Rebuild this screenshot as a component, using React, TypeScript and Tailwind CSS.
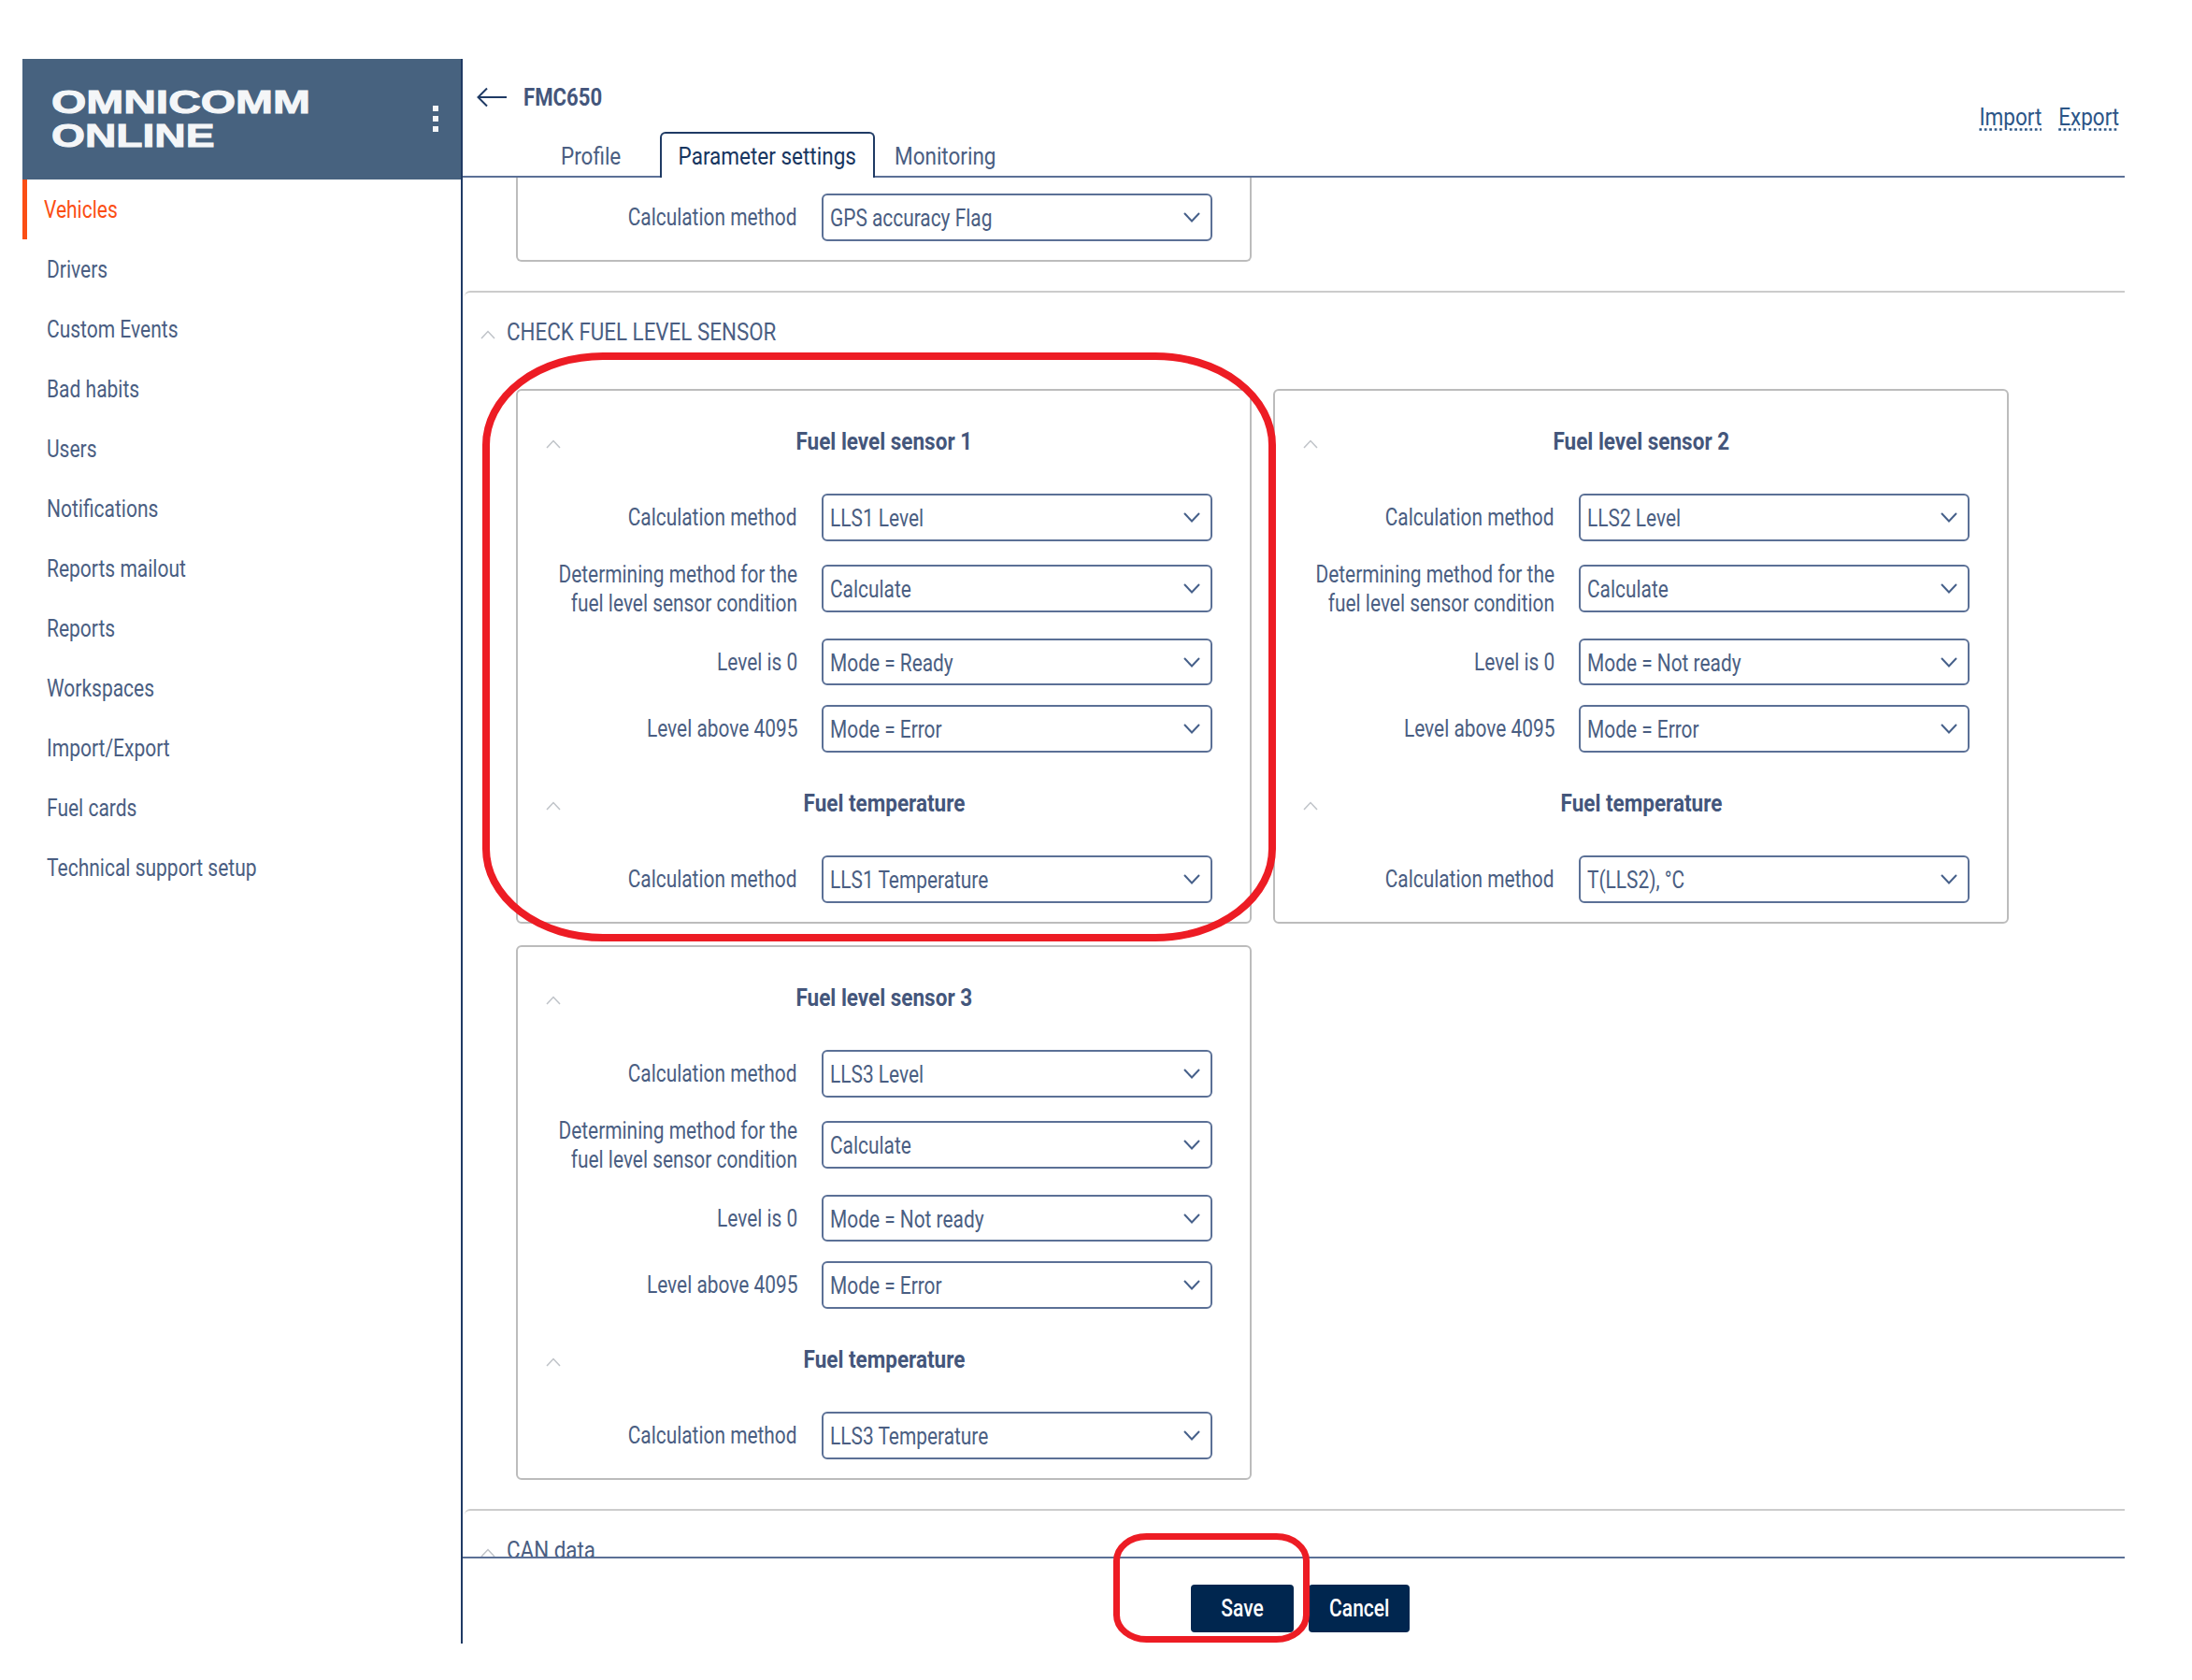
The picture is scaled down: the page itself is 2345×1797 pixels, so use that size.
import type { ReactNode } from "react";

const navItems = [
  "Vehicles",
  "Drivers",
  "Custom Events",
  "Bad habits",
  "Users",
  "Notifications",
  "Reports mailout",
  "Reports",
  "Workspaces",
  "Import/Export",
  "Fuel cards",
  "Technical support setup",
];

type SensorProps = {
  title: string;
  method: string;
  zero: string;
  temp: string;
};

function ChevronUp() {
  return (
    <svg width="16" height="10" viewBox="0 0 16 10" fill="none" stroke="#bfc3c8" strokeWidth="1.5">
      <path d="M1 9 L8 1.5 L15 9" />
    </svg>
  );
}

function Select({ value }: { value: string }) {
  return (
    <div className="flex h-full w-[418px] shrink-0 items-center justify-between rounded-[6px] border-2 border-[#5b7096] bg-white pl-[7px] pr-[11px]">
      <span className="inline-block origin-left scale-x-[0.835] whitespace-nowrap pt-[3px]">{value}</span>
      <svg width="18" height="11" viewBox="0 0 18 11" fill="none" stroke="#46608a" strokeWidth="2">
        <path d="M1 1 L9 9.5 L17 1" />
      </svg>
    </div>
  );
}

function Row({ label, value, className }: { label: ReactNode; value: string; className: string }) {
  return (
    <div className={`flex items-center ${className}`}>
      <div className="flex w-[299px] shrink-0 justify-end text-right leading-[31px]">
        <span className="inline-block shrink-0 origin-right scale-x-[0.835] whitespace-nowrap">{label}</span>
      </div>
      <div className="ml-[26px] h-full">
        <Select value={value} />
      </div>
    </div>
  );
}

function CardTitle({ text }: { text: string }) {
  return (
    <div className="grid h-[110px] grid-cols-[1fr_auto_1fr] items-center">
      <div className="mt-[4px] flex pl-[30px]">
        <ChevronUp />
      </div>
      <span className="inline-block scale-x-[0.9] whitespace-nowrap font-bold text-[#44567b]">{text}</span>
      <div />
    </div>
  );
}

function SensorCard({ title, method, zero, temp }: SensorProps) {
  return (
    <div className="h-[572px] w-[787px] rounded-[6px] border-2 border-[#bcbcbc] pb-[19px]">
      <CardTitle text={title} />
      <Row className="h-[51px]" label="Calculation method" value={method} />
      <Row
        className="mt-[25px] h-[51px]"
        label={
          <>
            Determining method for the
            <br />
            fuel level sensor condition
          </>
        }
        value="Calculate"
      />
      <Row className="mt-[28px] h-[50px]" label="Level is 0" value={zero} />
      <Row className="mt-[21px] h-[51px]" label="Level above 4095" value="Mode = Error" />
      <CardTitle text="Fuel temperature" />
      <Row className="h-[51px]" label="Calculation method" value={temp} />
    </div>
  );
}

function SectionHeader({ text }: { text: string }) {
  return (
    <div className="flex h-[84px] items-center pl-[17px]">
      <div className="mt-[6px] flex">
        <ChevronUp />
      </div>
      <span className="ml-[12px] inline-block origin-left scale-x-[0.895] whitespace-nowrap pt-[2px] text-[#4a5e82]">{text}</span>
    </div>
  );
}

export default function App() {
  return (
    <div className="relative flex h-[1797px] w-[2345px] overflow-hidden bg-white pl-[24px] pt-[63px] font-['Roboto',sans-serif] text-[25px] leading-[30px] text-[#4a5e82]">
      {/* Sidebar */}
      <aside className="w-[469px] shrink-0">
        <div className="flex h-[129px] items-center justify-between bg-[#47627f] pb-[2px] pl-[31px] pr-[24px]">
          <div className="font-['Liberation_Sans',sans-serif] text-[35px] font-bold leading-[36px] text-[#f4f6f8] [-webkit-text-stroke:1px_#f4f6f8]">
            <div className="origin-left scale-x-[1.37] whitespace-nowrap">OMNICOMM</div>
            <div className="origin-left scale-x-[1.32] whitespace-nowrap">ONLINE</div>
          </div>
          <div className="flex flex-col gap-[5px]">
            <div className="h-[6px] w-[6px] bg-[#f4f6f8]" />
            <div className="h-[6px] w-[6px] bg-[#f4f6f8]" />
            <div className="h-[6px] w-[6px] bg-[#f4f6f8]" />
          </div>
        </div>
        <nav>
          {navItems.map((item, i) => (
            <div
              key={item}
              className={
                i === 0
                  ? "flex h-[64px] items-center border-l-[5px] border-[#fb4e14] pl-[18px] pt-[2px] text-[#fb4e14]"
                  : "flex h-[64px] items-center pl-[26px] pt-[2px] text-[#4a5e82]"
              }
            >
              <span className="inline-block origin-left scale-x-[0.84] whitespace-nowrap">{item}</span>
            </div>
          ))}
        </nav>
      </aside>

      {/* Main */}
      <main className="flex h-[1695px] w-[1780px] shrink-0 flex-col border-l-2 border-[#1f3a64]">
        <header className="h-[127px] shrink-0 border-b-2 border-[#5b7096]">
          <div className="flex h-[78px] items-start justify-between pl-[15px] pr-[6px]">
            <div className="flex items-center pt-[25px]">
              <svg width="32" height="22" viewBox="0 0 32 22" fill="none" stroke="#1f3a64" strokeWidth="2">
                <path d="M32 11 H2 M11 1.5 L1.5 11 L11 20.5" />
              </svg>
              <span className="ml-[18px] inline-block origin-left scale-x-[0.885] pt-[2px] font-bold text-[#44567b]">FMC650</span>
            </div>
            <div className="flex gap-[11px] pt-[48px] text-[#2b5587]">
              <span className="inline-block origin-right scale-x-[0.9] underline decoration-dotted underline-offset-[3px]">Import</span>
              <span className="inline-block origin-right scale-x-[0.9] underline decoration-dotted underline-offset-[3px]">Export</span>
            </div>
          </div>
          <div className="relative flex h-[47px] items-start pl-[105px]">
            <div className="w-[106px] pt-[12px]">
              <span className="inline-block origin-left scale-x-[0.9]">Profile</span>
            </div>
            <div className="flex h-[49px] w-[230px] items-start justify-center rounded-t-[6px] border-2 border-b-0 border-[#1f3a64] bg-white pt-[10px] text-[#17355f]">
              <span className="inline-block scale-x-[0.9] whitespace-nowrap">Parameter settings</span>
            </div>
            <div className="ml-[21px] pt-[12px]">
              <span className="inline-block origin-left scale-x-[0.9]">Monitoring</span>
            </div>
          </div>
        </header>

        <div className="min-h-0 flex-1 overflow-hidden">
          <div className="ml-[57px] h-[90px] w-[787px] rounded-b-[6px] border-x-2 border-b-2 border-[#bcbcbc] pt-[17px]">
            <Row className="h-[51px]" label="Calculation method" value="GPS accuracy Flag" />
          </div>

          <section className="ml-[2px] mt-[31px] rounded-tl-[6px] border-t-2 border-[#cccccc]">
            <SectionHeader text="CHECK FUEL LEVEL SENSOR" />
            <div className="ml-[55px] mt-[19px] flex flex-wrap gap-x-[23px] gap-y-[23px]">
              <SensorCard title="Fuel level sensor 1" method="LLS1 Level" zero="Mode = Ready" temp="LLS1 Temperature" />
              <SensorCard title="Fuel level sensor 2" method="LLS2 Level" zero="Mode = Not ready" temp="T(LLS2), °C" />
              <SensorCard title="Fuel level sensor 3" method="LLS3 Level" zero="Mode = Not ready" temp="LLS3 Temperature" />
            </div>
          </section>

          <section className="ml-[2px] mt-[31px] rounded-tl-[6px] border-t-2 border-[#cccccc]">
            <SectionHeader text="CAN data" />
          </section>
        </div>

        <footer className="flex h-[93px] shrink-0 items-start gap-[16px] border-t-2 border-[#5b7096] pl-[779px] pt-[28px]">
          <button type="button" className="flex h-[51px] w-[110px] items-center justify-center rounded-[4px] bg-[#00264f] font-medium text-white">
            <span className="inline-block scale-x-[0.84]">Save</span>
          </button>
          <button type="button" className="flex h-[51px] w-[108px] items-center justify-center rounded-[4px] bg-[#00264f] font-medium text-white">
            <span className="inline-block scale-x-[0.84]">Cancel</span>
          </button>
        </footer>
      </main>

      {/* Red annotation marks */}
      <svg className="pointer-events-none absolute left-0 top-0" width="2345" height="1797" fill="none" stroke="#ed1c24">
        <rect x="520" y="381" width="841" height="622" rx="125" ry="95" strokeWidth="8" />
        <rect x="1194.5" y="1643.5" width="203" height="110" rx="32" ry="26" strokeWidth="7" />
      </svg>
    </div>
  );
}
